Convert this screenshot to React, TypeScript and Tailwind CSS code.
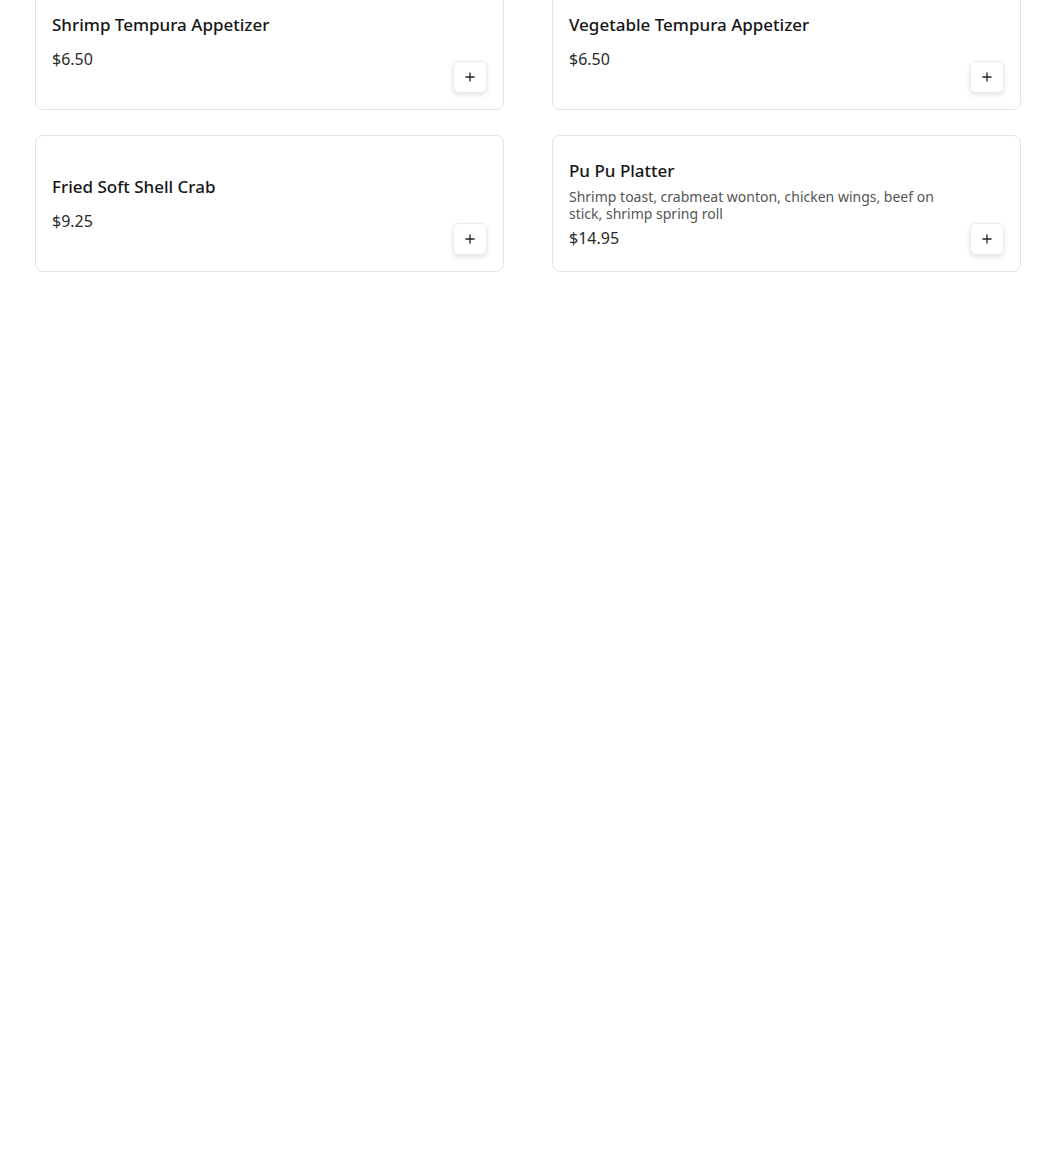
import { Plus } from 'lucide-react';

type MenuItem = {
  name: string;
  price: string;
  description?: string;
};

const items: MenuItem[] = [
  { name: 'Shrimp Tempura Appetizer', price: '$6.50' },
  { name: 'Vegetable Tempura Appetizer', price: '$6.50' },
  { name: 'Fried Soft Shell Crab', price: '$9.25' },
  {
    name: 'Pu Pu Platter',
    price: '$14.95',
    description: 'Shrimp toast, crabmeat wonton, chicken wings, beef on stick, shrimp spring roll',
  },
];

function MenuCard({ item }: { item: MenuItem }) {
  return (
    <div className="flex min-h-[137px] rounded-lg border border-[#e3e3e3] bg-white p-4">
      {/* Text */}
      <div className="flex flex-1 flex-col justify-center pr-6 pt-[2px]">
        <h3 className="text-[17px] font-medium leading-[22px] text-[#161616]">{item.name}</h3>
        {item.description && (
          <p className="mt-[6px] text-[14px] leading-[17px] text-[#555]">{item.description}</p>
        )}
        <p
          className={`text-[16px] leading-[24px] text-[#2a2a2a] ${
            item.description ? 'mt-1' : 'mt-[11px]'
          }`}
        >
          {item.price}
        </p>
      </div>

      {/* Add button */}
      <button
        type="button"
        className="flex h-8 w-[34px] shrink-0 items-center justify-center self-end rounded-md border border-[#ececec] bg-white shadow-[0_2px_5px_rgba(0,0,0,0.12)]"
      >
        <Plus className="h-[14px] w-[14px] text-[#222]" strokeWidth={2.25} />
      </button>
    </div>
  );
}

export default function App() {
  return (
    <div
      className="min-h-[1172px] bg-white pl-[35px] pr-[29px]"
      style={{ fontFamily: '"Noto Sans", "DejaVu Sans", sans-serif' }}
    >
      <div className="-mt-[27px] grid grid-cols-2 gap-x-[48px] gap-y-[25px]">
        {items.map((item) => (
          <MenuCard key={item.name} item={item} />
        ))}
      </div>
    </div>
  );
}
